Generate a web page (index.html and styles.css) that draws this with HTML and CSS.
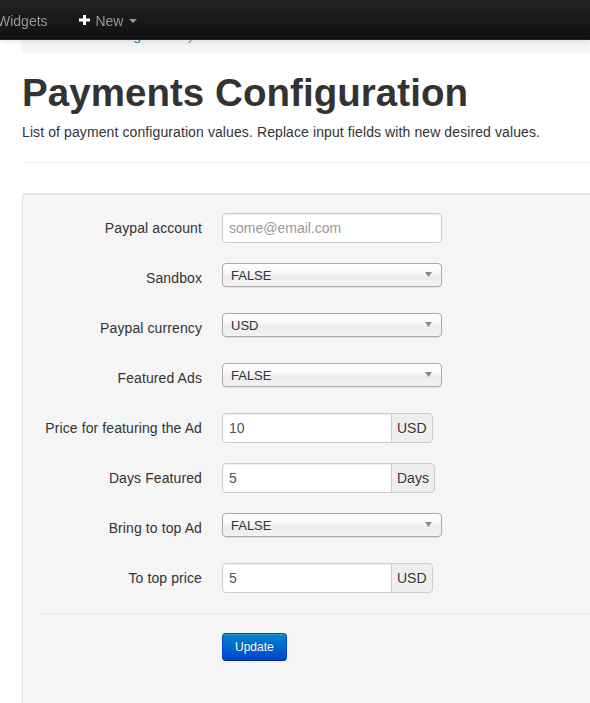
FILE: index.html
```html
<!DOCTYPE html>
<html lang="en">
<head>
<meta charset="utf-8">
<title>Payments Configuration</title>
<link rel="stylesheet" href="styles.css">
</head>
<body>
<div class="navbar">
  <ul class="nav">
    <li><a href="#" class="nav-link">Widgets</a></li>
    <li>
      <a href="#" class="nav-link dropdown-toggle"><svg class="icon-plus" width="14" height="14" viewBox="0 0 14 14" aria-hidden="true"><rect x="1" y="4.5" width="11" height="3" fill="#fff"/><rect x="5" y="1" width="3" height="10" fill="#fff"/></svg> New <b class="caret"></b></a>
    </li>
  </ul>
</div>

<div class="container">
  <ul class="breadcrumb">
    <li><a href="#">Home</a> <span class="divider">/</span></li>
    <li><a href="#">Settings</a> <span class="divider">/</span></li>
    <li class="active">Payments</li>
  </ul>

  <div class="page-header">
    <h1>Payments Configuration</h1>
    <p>List of payment configuration values. Replace input fields with new desired values.</p>
  </div>

  <form class="well form-horizontal">
    <div class="control-group">
      <label class="control-label" for="f-account">Paypal account</label>
      <div class="controls"><input id="f-account" class="input" type="text" placeholder="some@email.com"></div>
    </div>

    <div class="control-group">
      <label class="control-label" for="f-sandbox">Sandbox</label>
      <div class="controls">
        <div class="select-wrap">
          <select id="f-sandbox" class="select"><option>FALSE</option><option>TRUE</option></select>
          <svg class="select-arrow" width="7" height="5" viewBox="0 0 7 5" aria-hidden="true"><path d="M0 0 H7 L3.5 5 Z" fill="#8a8a8a"/></svg>
        </div>
      </div>
    </div>

    <div class="control-group">
      <label class="control-label" for="f-currency">Paypal currency</label>
      <div class="controls">
        <div class="select-wrap">
          <select id="f-currency" class="select"><option>USD</option><option>EUR</option></select>
          <svg class="select-arrow" width="7" height="5" viewBox="0 0 7 5" aria-hidden="true"><path d="M0 0 H7 L3.5 5 Z" fill="#8a8a8a"/></svg>
        </div>
      </div>
    </div>

    <div class="control-group">
      <label class="control-label" for="f-featured">Featured Ads</label>
      <div class="controls">
        <div class="select-wrap">
          <select id="f-featured" class="select"><option>FALSE</option><option>TRUE</option></select>
          <svg class="select-arrow" width="7" height="5" viewBox="0 0 7 5" aria-hidden="true"><path d="M0 0 H7 L3.5 5 Z" fill="#8a8a8a"/></svg>
        </div>
      </div>
    </div>

    <div class="control-group">
      <label class="control-label" for="f-price">Price for featuring the Ad</label>
      <div class="controls">
        <div class="input-append"><input id="f-price" class="input input-short" type="text" value="10"><span class="add-on">USD</span></div>
      </div>
    </div>

    <div class="control-group">
      <label class="control-label" for="f-days">Days Featured</label>
      <div class="controls">
        <div class="input-append"><input id="f-days" class="input input-short" type="text" value="5"><span class="add-on">Days</span></div>
      </div>
    </div>

    <div class="control-group">
      <label class="control-label" for="f-top">Bring to top Ad</label>
      <div class="controls">
        <div class="select-wrap">
          <select id="f-top" class="select"><option>FALSE</option><option>TRUE</option></select>
          <svg class="select-arrow" width="7" height="5" viewBox="0 0 7 5" aria-hidden="true"><path d="M0 0 H7 L3.5 5 Z" fill="#8a8a8a"/></svg>
        </div>
      </div>
    </div>

    <div class="control-group">
      <label class="control-label" for="f-topprice">To top price</label>
      <div class="controls">
        <div class="input-append"><input id="f-topprice" class="input input-short" type="text" value="5"><span class="add-on">USD</span></div>
      </div>
    </div>

    <div class="form-actions">
      <button type="submit" class="btn btn-primary">Update</button>
    </div>
  </form>
</div>
</body>
</html>
```

FILE: styles.css
```css
html, body {
  overflow: hidden;
}

body {
  margin: 0;
  font-family: "Liberation Sans", Arial, Helvetica, sans-serif;
  font-size: 14px;
  line-height: 20px;
  letter-spacing: 0.1px;
  color: #333;
  background: #fff;
}

/* ---------- navbar ---------- */
.navbar {
  position: fixed;
  top: 0;
  left: 0;
  right: 0;
  z-index: 10;
  height: 39px;
  background: linear-gradient(to bottom, #222 0%, #111 100%);
  border-bottom: 1px solid #252525;
  box-shadow: 0 1px 6px rgba(0, 0, 0, 0.12);
}

.nav {
  display: flex;
  margin: 0 0 0 -18px;
  padding: 0;
  list-style: none;
}

.nav-link {
  display: block;
  padding: 11px 15px 8px;
  color: #999;
  letter-spacing: 0;
  text-decoration: none;
  text-shadow: 0 -1px 0 rgba(0, 0, 0, 0.25);
  white-space: nowrap;
}

.icon-plus {
  vertical-align: -2px;
}

.caret {
  display: inline-block;
  width: 0;
  height: 0;
  margin-left: 2px;
  margin-top: 8px;
  vertical-align: top;
  border-top: 4px solid #999;
  border-left: 4px solid transparent;
  border-right: 4px solid transparent;
}

/* ---------- container ---------- */
.container {
  width: 900px;
  margin-left: 22px;
  padding-top: 17px;
}

.breadcrumb {
  margin: 0 0 20px;
  padding: 8px 15px;
  list-style: none;
  background: #f5f5f5;
  border-radius: 4px;
}

.breadcrumb li {
  display: inline-block;
}

.breadcrumb a {
  color: #08c;
  text-decoration: none;
}

.breadcrumb .divider {
  padding: 0 5px;
  color: #ccc;
}

.breadcrumb .active {
  color: #999;
}

/* ---------- header ---------- */
.page-header {
  border-bottom: 1px solid #eee;
  margin-bottom: 30px;
}

.page-header h1 {
  margin: 0 0 9px;
  font-size: 38.5px;
  line-height: 40px;
  font-weight: bold;
  letter-spacing: 0.05px;
  color: #333;
}

.page-header p {
  margin: 0 0 20px;
}

/* ---------- well form ---------- */
.well {
  margin: 0 0 20px;
  padding: 19px;
  background: #f5f5f5;
  border: 1px solid #e3e3e3;
  border-radius: 4px;
  box-shadow: inset 0 1px 1px rgba(0, 0, 0, 0.05);
}

.control-group {
  display: flex;
  margin-bottom: 20px;
}

.control-label {
  flex: 0 0 160px;
  margin-right: 20px;
  padding-top: 5px;
  text-align: right;
  line-height: 20px;
}

.controls {
  display: flex;
  align-items: flex-start;
  min-height: 30px;
}

.input {
  box-sizing: border-box;
  width: 220px;
  height: 30px;
  margin: 0;
  padding: 4px 6px;
  font-family: inherit;
  font-size: 14px;
  line-height: 20px;
  color: #555;
  background: #fff;
  border: 1px solid #ccc;
  border-radius: 4px;
  box-shadow: inset 0 1px 1px rgba(0, 0, 0, 0.075);
}

.input::placeholder {
  color: #999;
}

.input-append {
  display: flex;
}

.input-short {
  width: 170px;
  border-radius: 4px 0 0 4px;
}

.add-on {
  box-sizing: border-box;
  height: 30px;
  min-width: 16px;
  margin-left: -1px;
  padding: 4px 5px;
  line-height: 20px;
  letter-spacing: 0;
  text-align: center;
  color: #333;
  background: #eee;
  border: 1px solid #ccc;
  border-radius: 0 4px 4px 0;
  text-shadow: 0 1px 0 #fff;
}

.select-wrap {
  position: relative;
  width: 220px;
  height: 24px;
}

.select {
  -webkit-appearance: none;
  appearance: none;
  box-sizing: border-box;
  width: 100%;
  height: 24px;
  margin: 0;
  padding: 1px 20px 0 8px;
  font-family: "Liberation Sans", Arial, sans-serif;
  font-size: 13px;
  color: #333;
  background: linear-gradient(to bottom, #ffffff 0%, #f7f7f7 45%, #ececec 55%, #f3f3f3 100%);
  border: 1px solid #a9a9a9;
  border-radius: 4px;
  box-shadow: 0 1px 1px rgba(0, 0, 0, 0.08);
}

.select-arrow {
  position: absolute;
  right: 10px;
  top: 9px;
  pointer-events: none;
}

.form-actions {
  margin: 0 0 20px;
  padding: 19px 20px 20px 180px;
  border-top: 1px solid #e5e5e5;
}

.btn {
  box-sizing: border-box;
  height: 28px;
  padding: 3px 12px;
  font-family: inherit;
  font-size: 12px;
  line-height: 20px;
  cursor: pointer;
  border-radius: 4px;
}

.btn-primary {
  color: #fff;
  text-shadow: 0 -1px 0 rgba(0, 0, 0, 0.25);
  background: linear-gradient(to bottom, #0088cc, #0044cc);
  border: 1px solid #0044cc;
  border-bottom-color: #002a80;
  box-shadow: inset 0 1px 0 rgba(255, 255, 255, 0.2), 0 1px 2px rgba(0, 0, 0, 0.05);
}
```
